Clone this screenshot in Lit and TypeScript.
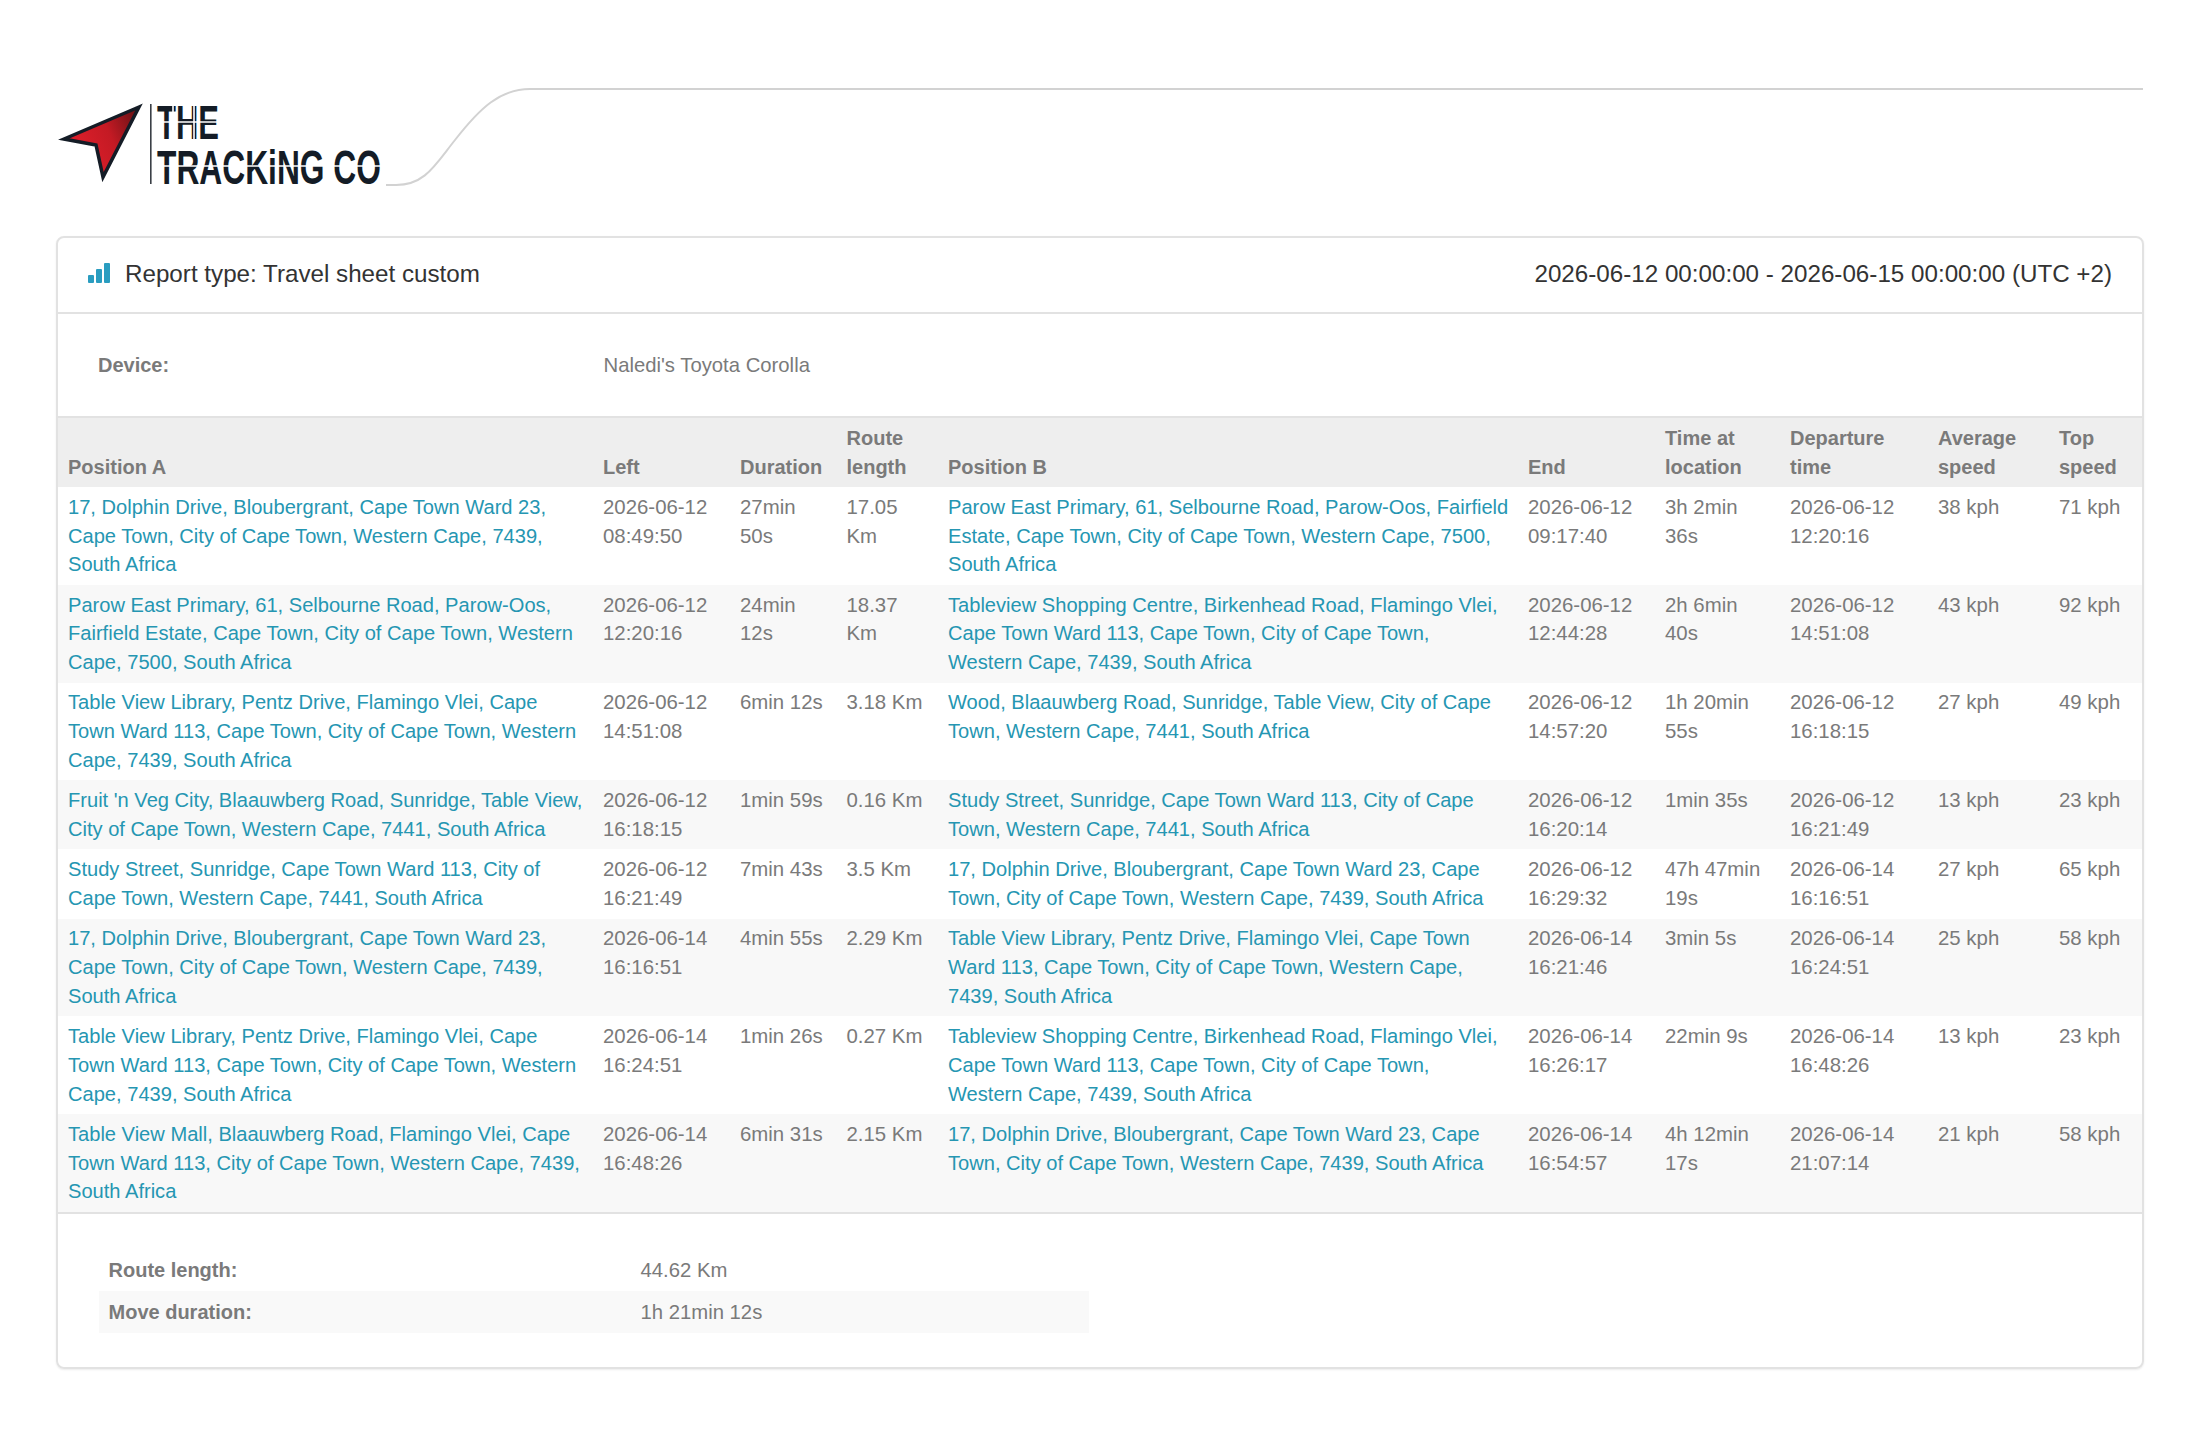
import { LitElement, html, css } from 'lit'
import { customElement } from 'lit/decorators.js'

const DOLPHIN = '17, Dolphin Drive, Bloubergrant, Cape Town Ward 23, Cape Town, City of Cape Town, Western Cape, 7439, South Africa'
const PAROW = 'Parow East Primary, 61, Selbourne Road, Parow-Oos, Fairfield Estate, Cape Town, City of Cape Town, Western Cape, 7500, South Africa'
const TABLEVIEW = 'Tableview Shopping Centre, Birkenhead Road, Flamingo Vlei, Cape Town Ward 113, Cape Town, City of Cape Town, Western Cape, 7439, South Africa'
const LIBRARY = 'Table View Library, Pentz Drive, Flamingo Vlei, Cape Town Ward 113, Cape Town, City of Cape Town, Western Cape, 7439, South Africa'
const STUDY = 'Study Street, Sunridge, Cape Town Ward 113, City of Cape Town, Western Cape, 7441, South Africa'

const HEADS = ['Position A', 'Left', 'Duration', 'Route length', 'Position B', 'End', 'Time at location', 'Departure time', 'Average speed', 'Top speed']
const WIDTHS = [534, 137, 106.5, 101.5, 580, 137, 125, 148, 121, 94]

const ROWS = [
    [DOLPHIN, '2026-06-12 08:49:50', '27min 50s', '17.05 Km', PAROW, '2026-06-12 09:17:40', '3h 2min 36s', '2026-06-12 12:20:16', '38 kph', '71 kph'],
    [PAROW, '2026-06-12 12:20:16', '24min 12s', '18.37 Km', TABLEVIEW, '2026-06-12 12:44:28', '2h 6min 40s', '2026-06-12 14:51:08', '43 kph', '92 kph'],
    [LIBRARY, '2026-06-12 14:51:08', '6min 12s', '3.18 Km', 'Wood, Blaauwberg Road, Sunridge, Table View, City of Cape Town, Western Cape, 7441, South Africa', '2026-06-12 14:57:20', '1h 20min 55s', '2026-06-12 16:18:15', '27 kph', '49 kph'],
    ["Fruit 'n Veg City, Blaauwberg Road, Sunridge, Table View, City of Cape Town, Western Cape, 7441, South Africa", '2026-06-12 16:18:15', '1min 59s', '0.16 Km', STUDY, '2026-06-12 16:20:14', '1min 35s', '2026-06-12 16:21:49', '13 kph', '23 kph'],
    [STUDY, '2026-06-12 16:21:49', '7min 43s', '3.5 Km', DOLPHIN, '2026-06-12 16:29:32', '47h 47min 19s', '2026-06-14 16:16:51', '27 kph', '65 kph'],
    [DOLPHIN, '2026-06-14 16:16:51', '4min 55s', '2.29 Km', LIBRARY, '2026-06-14 16:21:46', '3min 5s', '2026-06-14 16:24:51', '25 kph', '58 kph'],
    [LIBRARY, '2026-06-14 16:24:51', '1min 26s', '0.27 Km', TABLEVIEW, '2026-06-14 16:26:17', '22min 9s', '2026-06-14 16:48:26', '13 kph', '23 kph'],
    ['Table View Mall, Blaauwberg Road, Flamingo Vlei, Cape Town Ward 113, City of Cape Town, Western Cape, 7439, South Africa', '2026-06-14 16:48:26', '6min 31s', '2.15 Km', DOLPHIN, '2026-06-14 16:54:57', '4h 12min 17s', '2026-06-14 21:07:14', '21 kph', '58 kph']
]

@customElement('app-root')
export class AppRoot extends LitElement {
    static styles = css`
        :host {
            display: block;
            background: #fff;
            padding-bottom: 89px;
            font-family: 'Liberation Sans', Arial, sans-serif;
            font-size: 20.3px;
            line-height: 28.7px;
            color: #7a7a7a;
        }

        .brand {
            display: block;
            width: 2200px;
            height: 236px;
        }

        .brand text {
            font-family: 'Liberation Sans Narrow', 'Liberation Sans', sans-serif;
            font-weight: 700;
            fill: #141c26;
        }

        .card {
            margin: 0 56px;
            border: 2px solid #e2e2e2;
            border-radius: 8px;
            box-shadow: 0 1px 2px rgba(0, 0, 0, 0.08);
            overflow: hidden;
        }

        .card-head {
            display: flex;
            justify-content: space-between;
            align-items: center;
            height: 73px;
            padding: 0 30px 1px 30px;
            border-bottom: 2px solid #e2e2e2;
            font-size: 24.2px;
            color: #333;
        }

        .title {
            display: flex;
            align-items: center;
            gap: 15px;
        }

        .title svg {
            display: block;
            margin-top: -3px;
        }

        .device {
            display: grid;
            grid-template-columns: 505.5px 1fr;
            align-items: center;
            height: 102px;
            padding-left: 40px;
        }

        b {
            font-weight: 700;
            font-size: 20px;
        }

        table {
            width: 2084px;
            border-collapse: collapse;
            table-layout: fixed;
        }

        th {
            padding: 5.8px 11px;
            background: #eee;
            font-weight: 700;
            text-align: left;
            vertical-align: bottom;
            font-size: 20px;
        }

        thead tr {
            border-top: 2px solid #e2e2e2;
        }

        td {
            padding: 5.85px 11px;
            vertical-align: top;
            font-size: 20.4px;
        }

        th:first-child,
        td:first-child {
            padding-left: 10px;
            padding-right: 10px;
        }

        tbody tr:nth-child(even) {
            background: #f8f8f8;
        }

        tbody tr:last-child {
            border-bottom: 2px solid #e2e2e2;
        }

        td.place {
            color: #2596b2;
            font-size: 20.1px;
            padding-right: 8px;
        }

        .totals {
            width: 990px;
            margin: 35px 0 34px 41px;
        }

        .total {
            display: grid;
            grid-template-columns: 532px 1fr;
            align-items: center;
            height: 42px;
            padding-left: 9.5px;
            box-sizing: border-box;
        }

        .total.alt {
            background: #f9f9f9;
        }
    `

    renderBrand() {
        return html`
            <svg class="brand" viewBox="0 0 2200 236">
                <defs>
                    <linearGradient id="arrow" x1="0" y1="0.6" x2="1" y2="0.2">
                        <stop offset="0" stop-color="#e5202c"></stop>
                        <stop offset="0.6" stop-color="#c41a24"></stop>
                        <stop offset="1" stop-color="#6d1216"></stop>
                    </linearGradient>
                </defs>
                <path d="M139 107 L64 139 L96 145 L103 177 Z" fill="url(#arrow)" stroke="#141c26" stroke-width="3.5" stroke-linejoin="miter"></path>
                <rect x="150" y="104" width="1.6" height="80" fill="#3a3f46"></rect>
                <text x="157" y="138.5" font-size="48" textLength="62" lengthAdjust="spacingAndGlyphs">THE</text>
                <text x="157" y="183.5" font-size="49" textLength="224" lengthAdjust="spacingAndGlyphs">TRACKiNG CO</text>
                <path d="M173 104v35M194 104v35M158 122h60M205 128h14M157 166h224" stroke="#fff" stroke-width="1.6" fill="none"></path>
                <path d="M386 185 L396 185 C425 185 435 165 455 140 C480 108 500 89 530 89 L2143 89" fill="none" stroke="#d2d2d2" stroke-width="2"></path>
            </svg>
        `
    }

    renderCell(value: string, i: number) {
        return html`<td class=${i === 0 || i === 4 ? 'place' : ''}>${value}</td>`
    }

    render() {
        return html`
            ${this.renderBrand()}
            <div class="card">
                <div class="card-head">
                    <div class="title">
                        <svg width="22" height="20" viewBox="0 0 22 20" fill="#2a9dc0">
                            <rect x="0" y="12" width="6" height="8" rx="1"></rect>
                            <rect x="8" y="6" width="6" height="14" rx="1"></rect>
                            <rect x="16" y="0" width="6" height="20" rx="1"></rect>
                        </svg>
                        <span>Report type: Travel sheet custom</span>
                    </div>
                    <span>2026-06-12 00:00:00 - 2026-06-15 00:00:00 (UTC +2)</span>
                </div>
                <div class="device">
                    <b>Device:</b>
                    <span>Naledi's Toyota Corolla</span>
                </div>
                <table>
                    <colgroup>
                        ${WIDTHS.map((w) => html`<col style="width:${w}px" />`)}
                    </colgroup>
                    <thead>
                        <tr>${HEADS.map((h) => html`<th>${h}</th>`)}</tr>
                    </thead>
                    <tbody>
                        ${ROWS.map((r) => html`<tr>${r.map((v, i) => this.renderCell(v, i))}</tr>`)}
                    </tbody>
                </table>
                <div class="totals">
                    <div class="total"><b>Route length:</b><span>44.62 Km</span></div>
                    <div class="total alt"><b>Move duration:</b><span>1h 21min 12s</span></div>
                </div>
            </div>
        `
    }
}
